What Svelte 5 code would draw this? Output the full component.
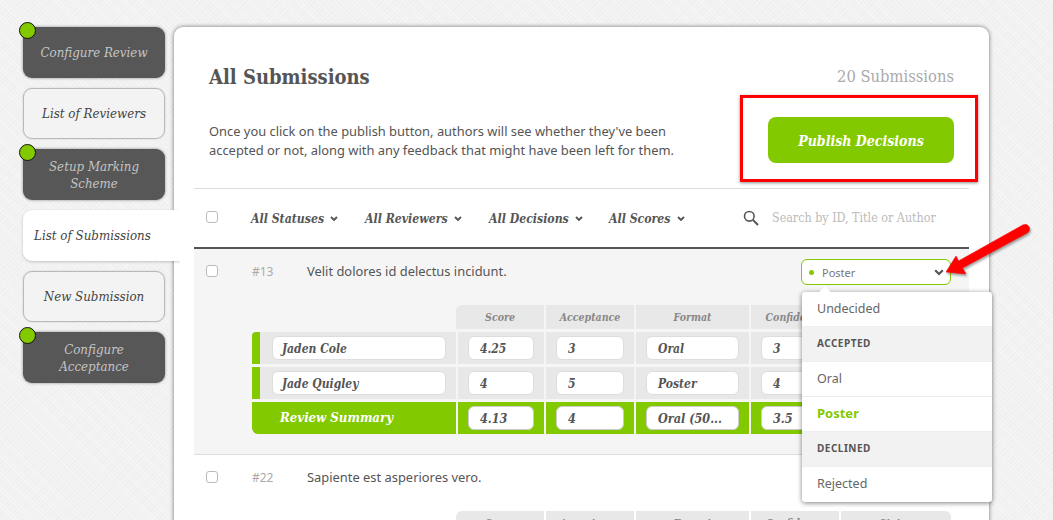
<script>
  const nav = [
    { label: 'Configure Review', kind: 'locked' },
    { label: 'List of Reviewers', kind: 'open' },
    { label: 'Setup Marking Scheme', kind: 'locked' },
    { label: 'List of Submissions', kind: 'active' },
    { label: 'New Submission', kind: 'open' },
    { label: 'Configure Acceptance', kind: 'locked' }
  ];
  const filters = ['All Statuses', 'All Reviewers', 'All Decisions', 'All Scores'];
  const heads = ['Score', 'Acceptance', 'Format', 'Confidence', 'Status'];
  const rows = [
    { name: 'Jaden Cole', vals: ['4.25', '3', 'Oral', '3', 'Accept'] },
    { name: 'Jade Quigley', vals: ['4', '5', 'Poster', '4', 'Accept'] }
  ];
  const summary = ['4.13', '4', 'Oral (50...', '3.5', 'Accept'];
  const menu = [
    { label: 'Undecided', kind: 'opt' },
    { label: 'ACCEPTED', kind: 'group' },
    { label: 'Oral', kind: 'opt' },
    { label: 'Poster', kind: 'sel' },
    { label: 'DECLINED', kind: 'group' },
    { label: 'Rejected', kind: 'opt' }
  ];
</script>

<div class="page">
  <nav class="side">
    {#each nav as n}
      <div class="step {n.kind}">
        {#if n.kind === 'locked'}<span class="dot"></span>{/if}
        <span class="step-label">{n.label}</span>
      </div>
    {/each}
  </nav>

  <main class="card">
    <header class="head">
      <div class="head-top">
        <h2>All Submissions</h2>
        <span class="count">20 Submissions</span>
      </div>
      <div class="head-bottom">
        <p>Once you click on the publish button, authors will see whether they've been<br />accepted or not, along with any feedback that might have been left for them.</p>
        <button class="publish">Publish Decisions</button>
      </div>
      <span class="redbox"></span>
    </header>

    <div class="filters">
      <span class="check"></span>
      <div class="filter-list">
        {#each filters as f}
          <span class="filter">{f}
            <svg width="8" height="6" viewBox="0 0 8 6"><path d="M1 1l3 3 3-3" fill="none" stroke="#555" stroke-width="1.9" /></svg>
          </span>
        {/each}
      </div>
      <svg class="search" width="16" height="16" viewBox="0 0 16 16"><circle cx="6.3" cy="6.3" r="4.8" fill="none" stroke="#555" stroke-width="1.6" /><path d="M10 10l5 5" stroke="#555" stroke-width="2" /></svg>
      <span class="placeholder">Search by ID, Title or Author</span>
    </div>

    <section class="sub open-row">
      <div class="sub-top">
        <span class="check"></span>
        <span class="id">#13</span>
        <span class="title">Velit dolores id delectus incidunt.</span>
        <div class="select">
          <span class="sel-dot"></span><span class="sel-text">Poster</span>
          <svg width="10" height="7" viewBox="0 0 10 7"><path d="M1.2 1.2l3.8 3.8 3.8-3.8" fill="none" stroke="#555" stroke-width="2.2" /></svg>
          <div class="menu">
            <span class="caret"></span>
            {#each menu as m}
              <div class="menu-item {m.kind}">{m.label}</div>
            {/each}
          </div>
        </div>
      </div>
      {@render table()}
    </section>

    <section class="sub">
      <div class="sub-top">
        <span class="check"></span>
        <span class="id">#22</span>
        <span class="title">Sapiente est asperiores vero.</span>
      </div>
      {@render table()}
    </section>
  </main>

  <svg class="arrow" width="90" height="56" viewBox="0 0 90 56">
    <path d="M0 48 L10 32 L12.5 37 L76.8 1 A4.5 4.5 0 0 1 81.2 9 L16.5 44 L20 50 Z" fill="#f00" stroke="#f00" stroke-width=".6" stroke-linejoin="round" />
  </svg>
</div>

{#snippet table()}
  <div class="grid">
    <div class="blank"></div>
    {#each heads as h, i}
      <div class="th" class:first={i === 0} class:last={i === heads.length - 1}>{h}</div>
    {/each}
    {#each rows as r}
      <div class="td name"><span class="input wide">{r.name}</span></div>
      {#each r.vals as v}
        <div class="td"><span class="input">{v}</span></div>
      {/each}
    {/each}
    <div class="td name sum sum-label">Review Summary</div>
    {#each summary as v, i}
      <div class="td sum" class:sum-end={i === summary.length - 1}><span class="input strong">{v}</span></div>
    {/each}
  </div>
{/snippet}

<style>
  :global(html), :global(body) {
    margin: 0;
    height: 520px;
    overflow: hidden;
  }
  :global(body) {
    background-color: #f1f1f1;
    background-image:
      repeating-linear-gradient(45deg, rgba(255,255,255,.35) 0 1px, transparent 1px 3px),
      repeating-linear-gradient(-45deg, rgba(0,0,0,.012) 0 1px, transparent 1px 4px);
  }
  .page {
    --serif: "DejaVu Serif Condensed", "DejaVu Serif", serif;
    --sans: "Noto Sans", "Open Sans", sans-serif;
    --green: #83c900;
    position: relative;
    display: flex;
    align-items: flex-start;
    gap: 9px;
    padding: 27px 0 0 23px;
    height: 493px;
    overflow: hidden;
    box-sizing: content-box;
    font-family: var(--sans);
  }
  .side {
    width: 142px;
    flex: none;
    display: flex;
    flex-direction: column;
    gap: 10px;
  }
  .step {
    position: relative;
    height: 51px;
    box-sizing: border-box;
    border-radius: 9px;
    display: flex;
    align-items: center;
    justify-content: center;
    text-align: center;
    padding: 0 15px;
    font: italic 13.2px/17px var(--serif);
  }
  .locked {
    background: #575757;
    color: #c4c4c4;
    box-shadow: 0 0 3px rgba(0,0,0,.45);
  }
  .open {
    border: 1px solid #b9b9b9;
    color: #444;
    box-shadow: 0 0 2px rgba(0,0,0,.15);
    background: #f3f3f3;
  }
  .active {
    background: #fff;
    color: #444;
    width: 157px;
    border-radius: 9px 0 0 9px;
    z-index: 2;
    justify-content: flex-start;
    padding: 0 11px;
    box-shadow: 0 1px 3px rgba(0,0,0,.2);
    clip-path: inset(-5px 0 -5px -5px);
  }
  .step.locked:nth-child(3) { padding: 0 20px; }
  .step.locked:nth-child(6) { padding: 0 30px; }
  .dot {
    position: absolute;
    left: -4px;
    top: -5px;
    width: 15px;
    height: 15px;
    border: 1px solid #111;
    border-radius: 50%;
    background: var(--green);
  }
  .card {
    width: 815px;
    height: 560px;
    flex: none;
    background: #fff;
    border-radius: 9px;
    box-shadow: 0 0 4px rgba(0,0,0,.55);
    padding: 0 20px;
    box-sizing: border-box;
  }
  .head {
    position: relative;
    height: 162px;
    box-sizing: border-box;
    border-bottom: 1px solid #ddd;
    padding: 36px 15px 0;
  }
  .head-top {
    display: flex;
    justify-content: space-between;
    align-items: center;
    height: 28px;
  }
  h2 {
    margin: 0;
    font: bold 20px/28px var(--serif);
    color: #555;
  }
  .count {
    font: 16.4px/28px var(--serif);
    color: #aaa;
    margin-top: 0;
  }
  .head-bottom {
    display: flex;
    justify-content: space-between;
    align-items: flex-start;
    margin-top: 26px;
  }
  p {
    margin: 0;
    padding-top: 5px;
    font: 12.9px/19px var(--sans);
    color: #555;
    white-space: nowrap;
  }
  .publish {
    width: 186px;
    height: 46px;
    border: 0;
    border-radius: 8px;
    background: var(--green);
    color: #fff;
    font: italic bold 14px var(--serif);
    padding: 2px 0 0;
  }
  .redbox {
    position: absolute;
    left: 546px;
    top: 68px;
    width: 238px;
    height: 87px;
    box-sizing: border-box;
    border: 3px solid #f00;
    box-shadow: 0 1px 3px rgba(0,0,0,.45);
  }
  .filters {
    height: 58px;
    display: flex;
    align-items: center;
    border-bottom: 2px solid #555;
    padding-left: 12px;
    box-sizing: content-box;
  }
  .check {
    width: 10px;
    height: 10px;
    flex: none;
    border: 1px solid #bbb;
    border-radius: 3px;
    background: #fff;
  }
  .filters > .check { margin-top: -2px; }
  .filter-list {
    display: flex;
    width: 492px;
    margin-left: 33px;
    margin-top: 1px;
    flex: none;
  }
  .filter {
    font: italic bold 12.2px var(--serif);
    color: #555;
    display: flex;
    align-items: center;
    gap: 6px;
  }
  .filter:nth-child(1) { width: 114px; }
  .filter:nth-child(2) { width: 124px; }
  .filter:nth-child(3) { width: 120px; }
  .search { flex: none; }
  .placeholder {
    margin-left: 13px;
    margin-top: -1px;
    font: 12.4px var(--serif);
    color: #bbb;
  }
  .sub {
    padding: 0 0 20px;
    border-bottom: 1px solid #ddd;
    height: 206px;
    box-sizing: border-box;
  }
  .open-row { background: #f5f5f5; }
  .sub-top {
    display: flex;
    align-items: flex-start;
    height: 56px;
    box-sizing: border-box;
    padding: 16px 18px 0 12px;
    position: relative;
  }
  .sub-top > .check { margin-top: 0; }
  .id {
    margin-left: 34px;
    width: 55px;
    font: 12px/14px var(--sans);
    color: #aaa;
  }
  .title {
    margin-top: -1px;
    font: 12.9px/14px var(--sans);
    color: #555;
  }
  .select {
    position: absolute;
    left: 607px;
    top: 10px;
    width: 150px;
    height: 26px;
    box-sizing: border-box;
    border: 1px solid var(--green);
    border-radius: 6px;
    background: #fff;
    display: flex;
    align-items: center;
    padding: 0 6px 0 7px;
    z-index: 3;
  }
  .sel-dot {
    width: 5px;
    height: 5px;
    border-radius: 50%;
    background: var(--green);
    margin-right: 8px;
  }
  .sel-text {
    flex: 1;
    font: 11px var(--sans);
    color: #777;
  }
  .menu {
    position: absolute;
    left: 0;
    top: 32px;
    width: 190px;
    background: #fff;
    border-radius: 3px;
    box-shadow: 0 1px 5px rgba(0,0,0,.5);
  }
  .caret {
    position: absolute;
    left: 19px;
    top: -4px;
    width: 8px;
    height: 8px;
    background: #fff;
    transform: rotate(45deg);
  }
  .menu-item {
    position: relative;
    height: 35px;
    box-sizing: border-box;
    display: flex;
    align-items: center;
    padding: 0 15px 2px;
    font: 12.5px var(--sans);
    color: #666;
    border-bottom: 1px solid #eee;
  }
  .menu-item:last-child { border-bottom: 0; height: 35px; }
  .menu-item.group {
    background: #f2f2f2;
    font: bold 10px var(--sans);
    letter-spacing: .5px;
    color: #555;
  }
  .menu-item.sel {
    color: var(--green);
    font-weight: bold;
    font-size: 13px;
  }
  .grid {
    display: grid;
    grid-template-columns: 204px 86px 88px 113px 88px 110px;
    grid-auto-rows: 32px;
    grid-template-rows: 24px;
    gap: 3px 2px;
    margin-left: 58px;
  }
  .th {
    background: #e8e8e8;
    font: italic bold 10.5px/24px var(--serif);
    color: #888;
    text-align: center;
  }
  .th.first { margin-left: -2px; border-top-left-radius: 6px; }
  .th.last { border-top-right-radius: 6px; }
  .td {
    background: #e8e8e8;
    display: flex;
    align-items: center;
    padding: 0 10px;
    box-sizing: border-box;
  }
  .td.name {
    padding: 0 10px 0 12px;
    border-left: 8px solid var(--green);
  }
  .grid > .name:nth-child(7) { border-top-left-radius: 4px; }
  .input {
    flex: 1;
    min-width: 0;
    height: 24px;
    box-sizing: border-box;
    background: #fff;
    border: 1px solid #ddd;
    border-radius: 6px;
    padding: 0 11px;
    font: italic bold 12px/24px var(--serif);
    color: #555;
    white-space: nowrap;
    overflow: hidden;
  }
  .wide { padding: 0 9px; }
  .strong { border: 1px solid #ccc; font-size: 12.5px; }
  .sum { background: var(--green); }
  .sum-label {
    color: #fff;
    font: italic bold 13.1px var(--serif);
    padding-left: 20px !important;
    padding-bottom: 1px !important;
    border-bottom-left-radius: 6px;
  }
  .sum-end { border-bottom-right-radius: 6px; }
  .arrow {
    position: absolute;
    left: 946px;
    top: 224px;
    z-index: 5;
    filter: drop-shadow(1px 2px 1px rgba(0,0,0,.35));
  }
</style>
